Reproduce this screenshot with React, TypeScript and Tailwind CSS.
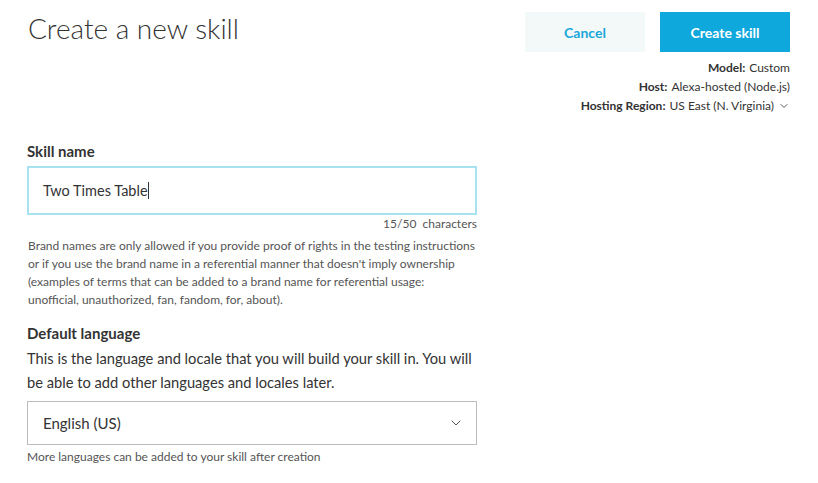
import { ChevronDown } from 'lucide-react';

const font = { fontFamily: 'Lato, "Open Sans", sans-serif' };

function Meta({ label, value, caret = false }: { label: string; value: string; caret?: boolean }) {
    return (
        <div className="flex items-center justify-end text-[12px] leading-[19px] text-[#333]">
            <span className="font-bold mr-1">{label}:</span>
            <span>{value}</span>
            {caret && <ChevronDown className="w-3 h-3 ml-1 text-[#555]" strokeWidth={2} />}
        </div>
    );
}

export default function App() {
    return (
        <div className="w-[818px] h-[483px] bg-white text-[#333] overflow-hidden" style={font}>
            <div className="flex justify-between pl-[28px] pr-[28px] pt-[12px]">
                <h1 className="text-[28px] font-light text-[#333] leading-[36px] mt-[-2px]">Create a new skill</h1>
                <div className="flex flex-col items-end">
                    <div className="flex gap-[15px]">
                        <button className="w-[120px] h-[40px] bg-[#f3f8f9] text-[#1aa7d9] text-[14px] font-bold">
                            Cancel
                        </button>
                        <button className="w-[130px] h-[40px] bg-[#0fa8dc] text-white text-[14px] font-bold">
                            Create skill
                        </button>
                    </div>
                    <div className="mt-[6px]">
                        <Meta label="Model" value="Custom" />
                        <Meta label="Host" value="Alexa-hosted (Node.js)" />
                        <Meta label="Hosting Region" value="US East (N. Virginia)" caret />
                    </div>
                </div>
            </div>

            <div className="pl-[27px] w-[477px] mt-[26px]">
                <label className="block text-[15px] font-bold leading-[20px]">Skill name</label>
                <div className="mt-[5px] h-[49px] border-2 border-[#a8e2f1] flex items-center pl-[14px]">
                    <span className="text-[14.5px] text-[#333]">Two Times Table</span>
                    <span className="w-px h-[17px] bg-[#333]" />
                </div>
                <div className="text-right text-[12px] text-[#555] leading-[16px] mt-[1px]">15/50&nbsp; characters</div>
                <p className="text-[12px] text-[#555] leading-[18px] mt-[5px] pl-px">
                    Brand names are only allowed if you provide proof of rights in the testing instructions
                    <br />
                    or if you use the brand name in a referential manner that doesn't imply ownership
                    <br />
                    (examples of terms that can be added to a brand name for referential usage:
                    <br />
                    unofficial, unauthorized, fan, fandom, for, about).
                </p>

                <label className="block text-[15px] font-bold leading-[20px] mt-[14px]">Default language</label>
                <p className="text-[14.7px] leading-[24px] mt-[3px] text-[#333]">
                    This is the language and locale that you will build your skill in. You will
                    <br />
                    be able to add other languages and locales later.
                </p>
                <div className="mt-[7px] h-[44px] border border-[#bcbcbc] flex items-center justify-between pl-[15px] pr-[12px]">
                    <span className="text-[15px]">English (US)</span>
                    <ChevronDown className="w-4 h-4 text-[#555]" strokeWidth={1.5} />
                </div>
                <div className="text-[12px] text-[#555] leading-[16px] mt-[4px]">
                    More languages can be added to your skill after creation
                </div>
            </div>
        </div>
    );
}
